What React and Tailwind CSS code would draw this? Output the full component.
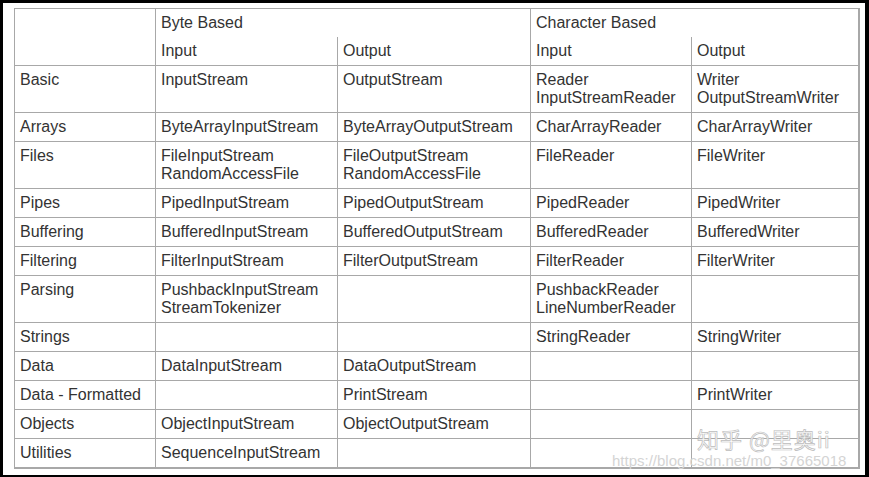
import React from 'react';

const rows = [
  ['Basic', 'InputStream', 'OutputStream', 'Reader\nInputStreamReader', 'Writer\nOutputStreamWriter'],
  ['Arrays', 'ByteArrayInputStream', 'ByteArrayOutputStream', 'CharArrayReader', 'CharArrayWriter'],
  ['Files', 'FileInputStream\nRandomAccessFile', 'FileOutputStream\nRandomAccessFile', 'FileReader', 'FileWriter'],
  ['Pipes', 'PipedInputStream', 'PipedOutputStream', 'PipedReader', 'PipedWriter'],
  ['Buffering', 'BufferedInputStream', 'BufferedOutputStream', 'BufferedReader', 'BufferedWriter'],
  ['Filtering', 'FilterInputStream', 'FilterOutputStream', 'FilterReader', 'FilterWriter'],
  ['Parsing', 'PushbackInputStream\nStreamTokenizer', '', 'PushbackReader\nLineNumberReader', ''],
  ['Strings', '', '', 'StringReader', 'StringWriter'],
  ['Data', 'DataInputStream', 'DataOutputStream', '', ''],
  ['Data - Formatted', '', 'PrintStream', '', 'PrintWriter'],
  ['Objects', 'ObjectInputStream', 'ObjectOutputStream', '', ''],
  ['Utilities', 'SequenceInputStream', '', '', ''],
];

const cell = 'border border-[#a8a8a8] px-[5px] pt-[5px] pb-[5px] align-top text-left font-normal whitespace-pre-line';

export default function App() {
  return (
    <div className="w-[869px] h-[477px] bg-black pt-[3px] pl-[3px] pr-[4px] pb-[2px]">
      <div className="relative w-full h-full bg-white pl-[11px] pt-[5px] font-['Liberation_Sans',Arial,sans-serif] text-[16px] leading-[18px] text-[#333]">
        <table className="table-fixed border-collapse w-[844px] border-r-2 border-b-2 border-[#a8a8a8]">
          <colgroup>
            <col className="w-[141px]" />
            <col className="w-[182px]" />
            <col className="w-[193px]" />
            <col className="w-[161px]" />
            <col className="w-[167px]" />
          </colgroup>
          <thead>
            <tr>
              <th rowSpan={2} className={cell}></th>
              <th colSpan={2} className={`${cell} border-b-0`}>Byte Based</th>
              <th colSpan={2} className={`${cell} border-b-0`}>Character Based</th>
            </tr>
            <tr>
              <th className={`${cell} border-t-0`}>Input</th>
              <th className={`${cell} border-t-0`}>Output</th>
              <th className={`${cell} border-t-0`}>Input</th>
              <th className={`${cell} border-t-0`}>Output</th>
            </tr>
          </thead>
          <tbody>
            {rows.map((r) => (
              <tr key={r[0]}>
                {r.map((c, i) => (
                  <td key={i} className={cell}>{c}</td>
                ))}
              </tr>
            ))}
          </tbody>
        </table>

        {/* watermarks */}
        <div className="absolute left-[694px] top-[423px] text-[22px] leading-[24px] tracking-[1px] text-white font-['Noto_Sans_CJK_SC','Liberation_Sans',sans-serif] [-webkit-text-stroke:0.7px_#bcbcbc]">
          知乎 @里奥ii
        </div>
        <div className="absolute left-[609px] top-[449px] text-[15px] leading-[18px] text-[#d4d4d4]">
          https://blog.csdn.net/m0_37665018
        </div>
      </div>
    </div>
  );
}
